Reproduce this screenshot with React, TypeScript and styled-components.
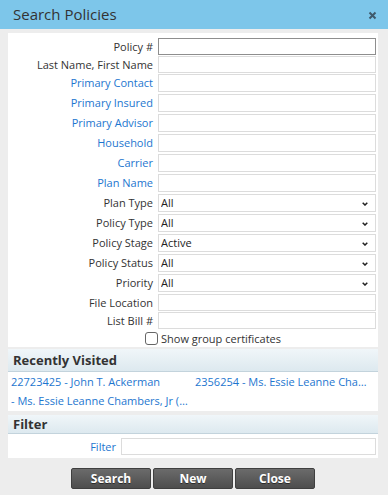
import React from "react";
import styled, { createGlobalStyle } from "styled-components";

interface Field {
  label: string;
  link?: boolean;
  kind: "text" | "select";
  value?: string;
  tall?: boolean;
  focus?: boolean;
}

const fields: Field[] = [
  { label: "Policy #", kind: "text", focus: true },
  { label: "Last Name, First Name", kind: "text" },
  { label: "Primary Contact", link: true, kind: "text", tall: true },
  { label: "Primary Insured", link: true, kind: "text", tall: true },
  { label: "Primary Advisor", link: true, kind: "text", tall: true },
  { label: "Household", link: true, kind: "text", tall: true },
  { label: "Carrier", link: true, kind: "text", tall: true },
  { label: "Plan Name", link: true, kind: "text", tall: true },
  { label: "Plan Type", kind: "select", value: "All", tall: true },
  { label: "Policy Type", kind: "select", value: "All", tall: true },
  { label: "Policy Stage", kind: "select", value: "Active", tall: true },
  { label: "Policy Status", kind: "select", value: "All", tall: true },
  { label: "Priority", kind: "select", value: "All", tall: true },
  { label: "File Location", kind: "text" },
  { label: "List Bill #", kind: "text" },
];

const recent = [
  "22723425 - John T. Ackerman",
  "2356254 - Ms. Essie Leanne Chambers, Jr (Primary)",
  "- Ms. Essie Leanne Chambers, Jr (Household)",
];

const App: React.FC = () => {
  return (
    <>
      <GlobalStyle />
      <Dialog>
        <TitleBar>
          <Title>Search Policies</Title>
          <CloseIcon width="9" height="9" viewBox="0 0 9 9">
            <path d="M1.5 1.5 L7.5 7.5 M7.5 1.5 L1.5 7.5" stroke="#3f5a6c" strokeWidth="2" />
          </CloseIcon>
        </TitleBar>
        <Body>
          <Panel>
            <FormGrid>
              {fields.map((f) => (
                <FormRow key={f.label} $tall={!!f.tall}>
                  <Label $link={!!f.link}>{f.label}</Label>
                  {f.kind === "text" ? (
                    <TextInput $focus={!!f.focus} />
                  ) : (
                    <SelectWrap>
                      <Select defaultValue={f.value}>
                        <option>{f.value}</option>
                      </Select>
                      <Chevron width="6" height="4" viewBox="0 0 6 4">
                        <path d="M0.7 0.7 L3 3 L5.3 0.7" fill="none" stroke="#222" strokeWidth="1.5" />
                      </Chevron>
                    </SelectWrap>
                  )}
                </FormRow>
              ))}
              <CheckRow>
                <CheckBox />
                <span>Show group certificates</span>
              </CheckRow>
            </FormGrid>
          </Panel>

          <Section>
            <SectionHeader>Recently Visited</SectionHeader>
            <RecentGrid>
              {recent.map((r) => (
                <RecentLink key={r}>{r}</RecentLink>
              ))}
            </RecentGrid>
          </Section>

          <Section $spaced>
            <SectionHeader $compact>Filter</SectionHeader>
            <FilterRow>
              <Label $link>Filter</Label>
              <TextInput />
            </FilterRow>
          </Section>

          <ButtonBar>
            <Button>Search</Button>
            <Button>New</Button>
            <Button>Close</Button>
          </ButtonBar>
        </Body>
      </Dialog>
    </>
  );
};

export default App;

const GlobalStyle = createGlobalStyle`
  body {
    margin: 0;
    background: #eeeeee;
    font-family: "Open Sans", "Liberation Sans", sans-serif;
  }
`;

const Dialog = styled.div`
  width: 388px;
  height: 495px;
  background: #ededed;
  display: flex;
  flex-direction: column;
`;

const TitleBar = styled.div`
  height: 29px;
  background: #7dc6ea;
  display: flex;
  align-items: center;
  justify-content: space-between;
  padding: 0 11px 0 13px;
  box-sizing: border-box;
`;

const Title = styled.div`
  font-size: 15px;
  color: #333;
  margin-top: -2px;
`;

const CloseIcon = styled.svg`
  margin-top: 2px;
`;

const Body = styled.div`
  padding: 4px 10px 0 8px;
  display: flex;
  flex-direction: column;
`;

const Panel = styled.div`
  background: #fff;
  padding: 5px 2px 1px 0;
`;

const FormGrid = styled.div`
  display: flex;
  flex-direction: column;
  gap: 2px;
`;

const FormRow = styled.div<{ $tall: boolean }>`
  display: grid;
  grid-template-columns: 145px 218px;
  column-gap: 5px;
  align-items: center;
  height: ${(p) => (p.$tall ? 18 : 16)}px;
`;

const Label = styled.label<{ $link?: boolean }>`
  text-align: right;
  font-size: 11px;
  line-height: 14px;
  white-space: nowrap;
  color: ${(p) => (p.$link ? "#1d76cf" : "#333")};
`;

const TextInput = styled.input<{ $focus?: boolean }>`
  box-sizing: border-box;
  width: 100%;
  height: 100%;
  margin: 0;
  padding: 0 3px;
  border: 1px solid ${(p) => (p.$focus ? "#8e8e8e" : "#dcdcdc")};
  background: #fff;
  font-family: inherit;
  font-size: 11px;
  outline: none;
`;

const SelectWrap = styled.div`
  position: relative;
  height: 18px;
`;

const Select = styled.select`
  appearance: none;
  display: block;
  box-sizing: border-box;
  width: 100%;
  height: 18px;
  margin: 0;
  padding: 0 0 0 2px;
  border: 1px solid #dcdcdc;
  border-radius: 0;
  background: #fff;
  color: #222;
  font-family: inherit;
  font-size: 11px;
  line-height: 16px;
  outline: none;
`;

const Chevron = styled.svg`
  position: absolute;
  right: 8px;
  top: 8px;
  pointer-events: none;
`;

const CheckRow = styled.label`
  display: flex;
  align-items: center;
  gap: 3px;
  height: 16px;
  padding-left: 137px;
  font-size: 11px;
  color: #333;
`;

const CheckBox = styled.input.attrs({ type: "checkbox" })`
  appearance: none;
  width: 13px;
  height: 13px;
  margin: 0;
  border: 1px solid #666;
  border-radius: 3px;
  background: #fff;
  box-sizing: border-box;
`;

const Section = styled.div<{ $spaced?: boolean }>`
  margin-top: ${(p) => (p.$spaced ? 4 : 2)}px;
  background: #fff;
`;

const SectionHeader = styled.div<{ $compact?: boolean }>`
  height: ${(p) => (p.$compact ? 19 : 23)}px;
  box-sizing: border-box;
  padding: ${(p) => (p.$compact ? 1 : 3)}px 5px 0;
  background: linear-gradient(#f0f6f9, #dde9ef);
  border-bottom: 1px solid #c3d3dc;
  font-size: 13px;
  font-weight: 700;
  color: #333;
  line-height: 17px;
`;

const RecentGrid = styled.div`
  display: grid;
  grid-template-columns: 180px 172px;
  column-gap: 4px;
  row-gap: 3px;
  padding: 2px 0 2px 3px;
`;

const RecentLink = styled.a`
  font-size: 11px;
  line-height: 16px;
  color: #1d76cf;
  white-space: nowrap;
  overflow: hidden;
  text-overflow: ellipsis;
  cursor: pointer;
`;

const FilterRow = styled.div`
  display: grid;
  grid-template-columns: 108px 255px;
  column-gap: 5px;
  align-items: center;
  height: 16px;
  padding: 4px 2px 4px 0;
`;

const ButtonBar = styled.div`
  display: flex;
  justify-content: center;
  gap: 2px;
  margin-top: 10px;
`;

const Button = styled.button`
  width: 80px;
  height: 21px;
  padding: 0;
  border: 1px solid #3f3f3f;
  border-radius: 2px;
  background: linear-gradient(#6b6b6b, #4d4d4d);
  color: #fff;
  font-family: inherit;
  font-size: 12px;
  font-weight: 700;
  text-shadow: 0 1px 0 rgba(0, 0, 0, 0.5);
  cursor: pointer;
`;
